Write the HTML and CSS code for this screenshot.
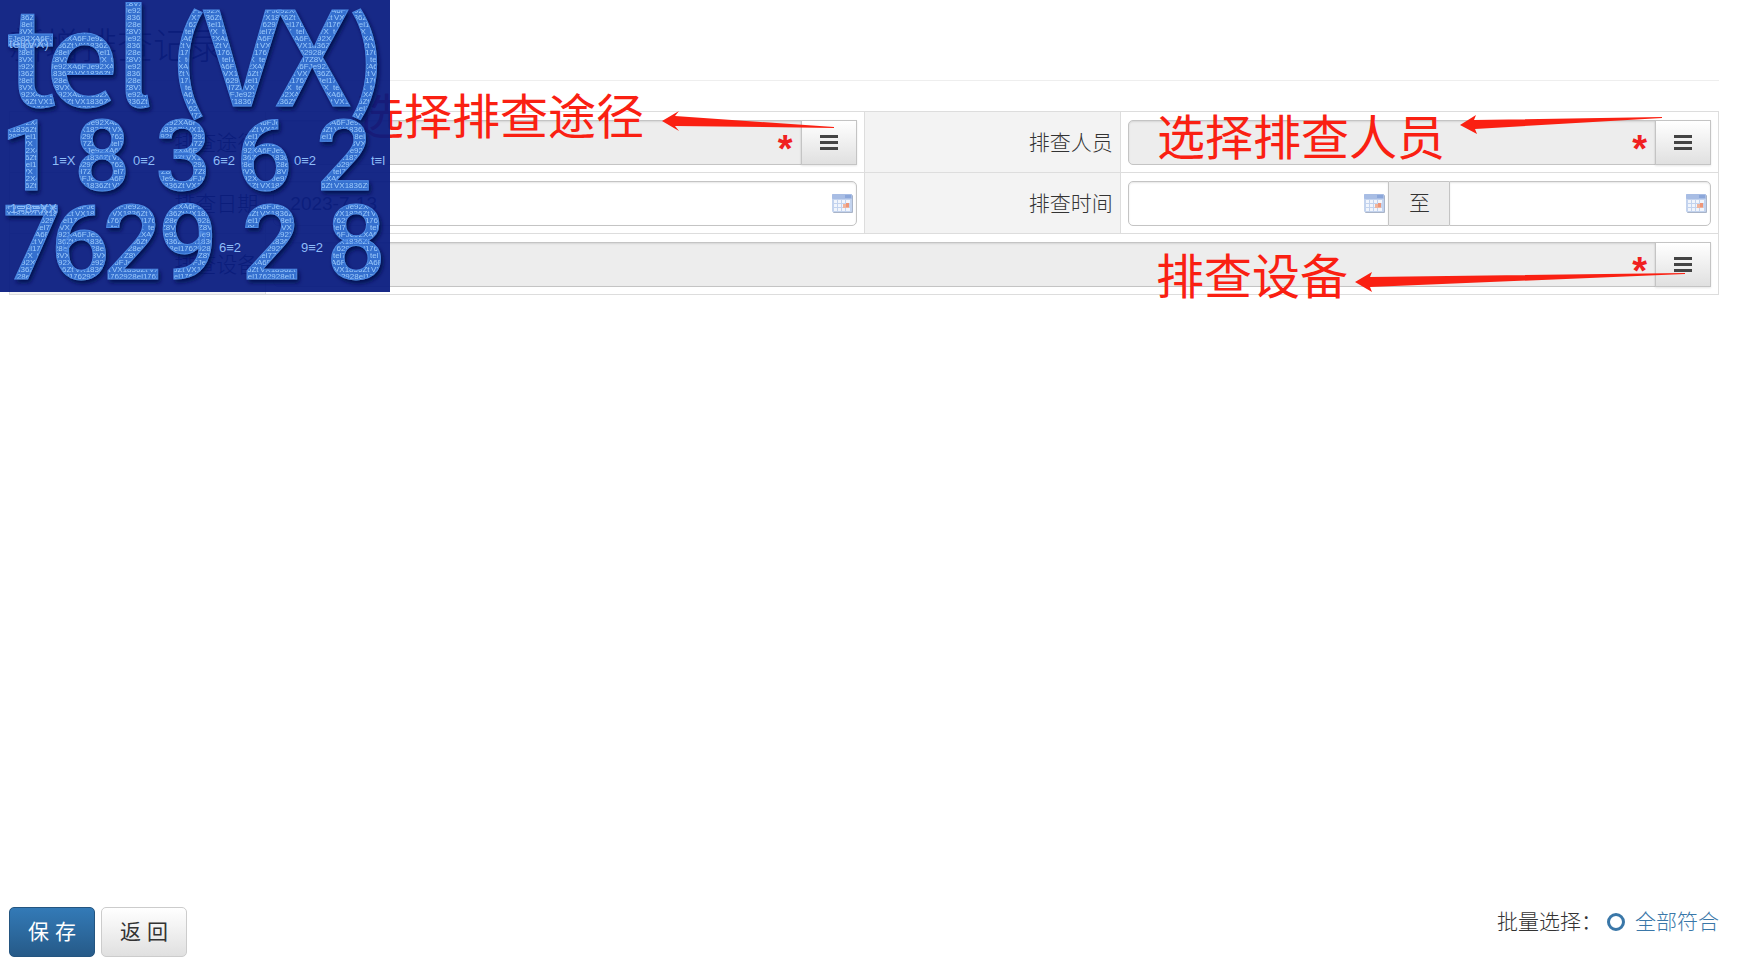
FILE: index.html
```html
<!DOCTYPE html>
<html lang="zh-CN">
<head>
  <meta charset="UTF-8">
  <title>新增排查记录</title>
  <meta name="viewport" content="width=device-width, initial-scale=1.0">
  <link rel="stylesheet" href="styles.css">
</head>
<body>
  <svg class="defs" width="0" height="0" aria-hidden="true">
    <symbol id="icon-date" viewBox="0 0 21 19">
      <rect x="1" y="1" width="20" height="18" rx="1" fill="#a9b4c8"/>
      <rect x="0" y="0" width="20" height="18" rx="1" fill="#c3d3ee"/>
      <rect x="0" y="0" width="20" height="5" rx="1" fill="#a8bde4"/>
      <rect x="13" y="1" width="6" height="3" fill="#8ca7da"/>
      <path d="M2 6h3v3H2zM6 6h3v3H6zM10 6h3v3h-3zM14 6h4v3h-4zM2 10h3v3H2zM6 10h3v3H6zM10 10h3v3h-3zM2 14h3v3H2zM6 14h3v3H6zM10 14h3v3h-3zM14 14h4v3h-4z" fill="#f1f5fc"/>
      <rect x="11" y="10" width="6" height="4" fill="#f0b49c"/>
      <rect x="14" y="9" width="3" height="4" fill="#ee9678"/>
    </symbol>
    <symbol id="icon-bars" viewBox="0 0 18 16">
      <path d="M0 0h18v3H0zM0 6h18v3H0zM0 12h18v3H0z" fill="#444"/>
    </symbol>
  </svg>

  <form class="page">
    <h1>新增排查记录</h1>

    <table class="form-table">
      <tr>
        <th><label for="way">排查途径</label></th>
        <td>
          <div class="group">
            <div class="field required"><input type="text" id="way" readonly></div>
            <button type="button" class="pick" aria-label="选择排查途径"><svg><use href="#icon-bars"/></svg></button>
          </div>
        </td>
        <th><label for="person">排查人员</label></th>
        <td>
          <div class="group">
            <div class="field required"><input type="text" id="person" readonly></div>
            <button type="button" class="pick" aria-label="选择排查人员"><svg><use href="#icon-bars"/></svg></button>
          </div>
        </td>
      </tr>
      <tr>
        <th><label for="date">排查日期</label></th>
        <td>
          <div class="group">
            <div class="field"><input type="text" id="date" value="2023-7-13"><svg class="date"><use href="#icon-date"/></svg></div>
          </div>
        </td>
        <th><label for="start">排查时间</label></th>
        <td>
          <div class="group">
            <div class="field"><input type="text" id="start"><svg class="date"><use href="#icon-date"/></svg></div>
            <label class="addon" for="end">至</label>
            <div class="field"><input type="text" id="end"><svg class="date"><use href="#icon-date"/></svg></div>
          </div>
        </td>
      </tr>
      <tr>
        <th><label for="device">排查设备</label></th>
        <td colspan="3">
          <div class="group">
            <div class="field required"><input type="text" id="device" readonly></div>
            <button type="button" class="pick" aria-label="选择排查设备"><svg><use href="#icon-bars"/></svg></button>
          </div>
        </td>
      </tr>
    </table>

    <div class="footer">
      <div class="actions">
        <button type="submit" class="btn btn-primary">保 存</button>
        <button type="button" class="btn">返 回</button>
      </div>
      <div class="batch">
        <span>批量选择：</span>
        <input type="radio" id="all" name="batch">
        <label for="all">全部符合</label>
      </div>
    </div>
  </form>

  <!-- notes -->
  <svg class="notes" width="1762" height="310">
    <text x="356" y="134">选择排查途径</text>
    <path d="M662 121L679 111L675 116L834 127L834 128L675 126L679 131Z"/>
    <text x="1157" y="155">选择排查人员</text>
    <path d="M1460 125L1476 115L1474 120L1662 117L1662 118L1475 129L1477 134Z"/>
    <text x="1156" y="294">排查设备</text>
    <path d="M1355 282L1372 272L1370 277L1685 273L1685 274L1370 287L1372 292Z"/>
  </svg>

  <!-- contact stamp -->
  <svg class="stamp" width="390" height="292">
    <defs>
      <pattern id="words" width="37" height="28" patternUnits="userSpaceOnUse">
        <rect width="37" height="28" fill="#3570cf"/>
        <g class="grain">
          <text x="0" y="6">tel7Z8VX</text>
          <text x="-2" y="13">A6FJe92X4</text>
          <text x="1" y="20">VX1836Zt</text>
          <text x="-1" y="27">762928el1</text>
        </g>
      </pattern>
      <filter id="emboss" x="-10%" y="-10%" width="120%" height="120%">
        <feGaussianBlur in="SourceAlpha" stdDeviation="2" result="soft"/>
        <feOffset in="soft" dx="2" dy="3" result="shadow"/>
        <feFlood flood-color="#07124e"/>
        <feComposite in2="shadow" operator="in" result="dark"/>
        <feMerge>
          <feMergeNode in="dark"/>
          <feMergeNode in="SourceGraphic"/>
        </feMerge>
      </filter>
    </defs>
    <g class="big" filter="url(#emboss)">
      <g class="line-one">
        <text x="31" y="106">t</text>
        <text x="82" y="106">e</text>
        <text x="134" y="106">l</text>
        <text class="paren" x="188" y="98">(</text>
        <text x="242" y="106">V</text>
        <text x="313" y="106">X</text>
        <text class="paren" x="367" y="98">)</text>
      </g>
      <g class="line-two">
        <text x="28" y="190">1</text>
        <text x="102" y="190">8</text>
        <text x="183" y="190">3</text>
        <text x="264" y="190">6</text>
        <text x="344" y="190">2</text>
      </g>
      <g class="line-three">
        <text x="32" y="279">7</text>
        <text x="80" y="279">6</text>
        <text x="132" y="279">2</text>
        <text x="188" y="279">9</text>
        <text x="271" y="279">2</text>
        <text x="356" y="279">8</text>
      </g>
    </g>
    <g class="tiny">
      <text x="9" y="48">tel(VX)</text>
      <text x="52" y="165">1≡X</text>
      <text x="133" y="165">0≡2</text>
      <text x="213" y="165">6≡2</text>
      <text x="294" y="165">0≡2</text>
      <text x="371" y="165">t≡l</text>
      <text x="10" y="213">1≡8≡XX</text>
      <text x="219" y="252">6≡2</text>
      <text x="301" y="252">9≡2</text>
    </g>
  </svg>
</body>
</html>
```
FILE: styles.css
```css
* {
  box-sizing: border-box;
}

body {
  margin: 0;
  position: relative;
  background: #fff;
  color: #333;
  font-family: "Liberation Sans", "Noto Sans CJK SC", sans-serif;
  font-size: 21px;
  line-height: 30px;
}

.defs {
  position: absolute;
}

.page {
  display: flex;
  flex-direction: column;
  min-height: 100vh;
  padding: 0 43px 17px 9px;
}

h1 {
  margin: 0 0 30px;
  padding: 23px 0 9px;
  border-bottom: 1px solid #eee;
  font-size: 36px;
  font-weight: 300;
  line-height: 48px;
}

/* form */
.form-table {
  width: 100%;
  table-layout: fixed;
  border-collapse: collapse;
}

.form-table th,
.form-table td {
  padding: 8px 7px 7px;
  border: 1px solid #ddd;
}

.form-table th {
  width: 15%;
  background: #f3f3f3;
  font-weight: 300;
  text-align: right;
}

.group {
  display: flex;
  height: 45px;
}

.field {
  position: relative;
  flex: 1;
}

.field input {
  display: block;
  width: 100%;
  height: 100%;
  padding: 0 16px;
  border: 1px solid #c4c4c4;
  background: #fff;
  box-shadow: inset 0 1px 2px rgba(0, 0, 0, 0.1);
  color: #444;
  font: inherit;
  font-size: 19px;
  outline: none;
}

.field input[readonly] {
  background: #ededed;
}

.field:first-child input {
  border-radius: 5px 0 0 5px;
}

.field:last-child input {
  border-radius: 0 5px 5px 0;
}

.field:only-child input {
  border-radius: 5px;
}

.required::after {
  content: "*";
  position: absolute;
  top: 7px;
  right: 9px;
  color: #f02020;
  font-size: 38px;
  font-weight: bold;
  line-height: 44px;
}

.date {
  position: absolute;
  top: 13px;
  right: 4px;
  width: 21px;
  height: 19px;
}

.pick {
  display: flex;
  align-items: center;
  justify-content: center;
  width: 56px;
  margin-left: -1px;
  padding: 0;
  border: 1px solid #c4c4c4;
  background: linear-gradient(#fff, #e0e0e0);
  box-shadow: 0 1px 2px rgba(0, 0, 0, 0.1);
  position: relative;
  cursor: pointer;
}

.pick svg {
  width: 18px;
  height: 16px;
}

.addon {
  width: 60px;
  border: solid #c4c4c4;
  border-width: 1px 0;
  background: #ededed;
  font-weight: 300;
  line-height: 42px;
  text-align: center;
}

/* footer */
.footer {
  display: flex;
  justify-content: space-between;
  align-items: flex-start;
  margin-top: auto;
}

.actions {
  display: flex;
  gap: 6px;
}

.btn {
  width: 86px;
  height: 50px;
  padding: 0;
  border: 1px solid #ccc;
  border-radius: 5px;
  background: linear-gradient(#fff, #e0e0e0);
  color: #333;
  font: inherit;
  cursor: pointer;
}

.btn-primary {
  border-color: #245580;
  background: linear-gradient(#337ab7, #265a88);
  color: #fff;
}

.batch {
  display: flex;
  align-items: center;
  font-weight: 300;
}

.batch input {
  appearance: none;
  width: 18px;
  height: 18px;
  margin: 0 10px 0 5px;
  border: 3px solid #3a77a8;
  border-radius: 50%;
}

.batch label {
  color: #3a77a8;
}

/* notes */
.notes {
  position: absolute;
  top: 0;
  left: 0;
  max-width: 100%;
  fill: #fa2012;
  font-size: 48px;
  pointer-events: none;
}

/* contact stamp */
.stamp {
  position: absolute;
  top: 0;
  left: 0;
  background: rgba(8, 28, 128, 0.94);
}

.big {
  fill: url(#words);
  stroke: #4a88e4;
  stroke-width: 1px;
  font-weight: 500;
  text-anchor: middle;
}

.line-one {
  font-family: "Noto Sans CJK SC", sans-serif;
  font-size: 130px;
}

.line-one .paren {
  font-size: 108px;
}

.line-two,
.line-three {
  font-family: Roboto, sans-serif;
}

.line-two {
  font-size: 98px;
}

.line-three {
  font-size: 104px;
}

.grain {
  fill: #9ccafc;
  stroke: none;
  font-family: "Liberation Sans", sans-serif;
  font-size: 8px;
  text-anchor: start;
}

.tiny {
  fill: #8ebcf8;
  font-size: 13px;
}
```
